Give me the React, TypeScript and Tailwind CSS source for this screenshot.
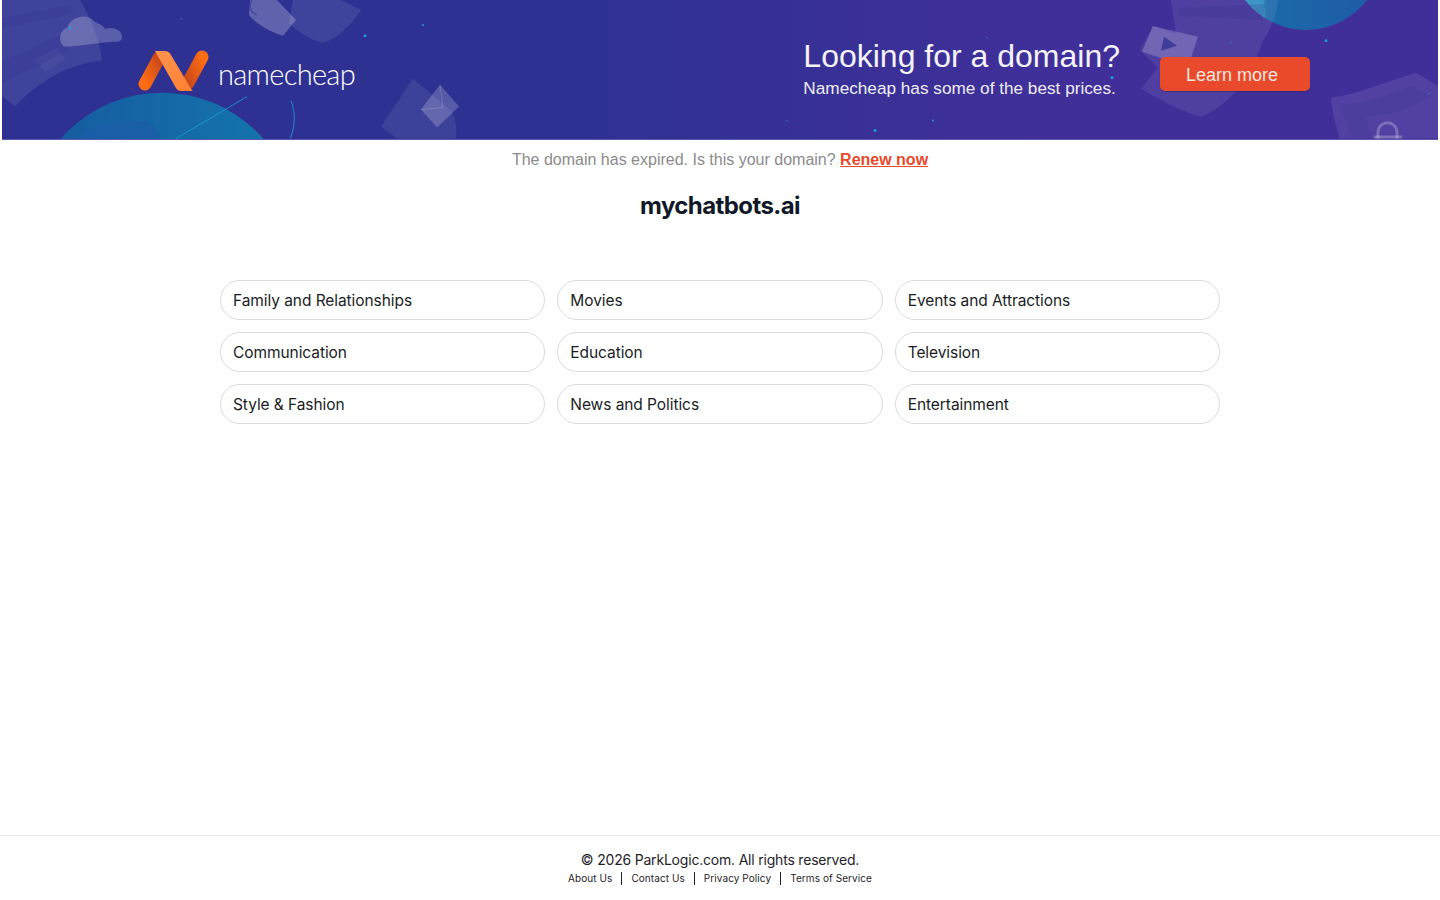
const topics = [
  'Family and Relationships',
  'Movies',
  'Events and Attractions',
  'Communication',
  'Education',
  'Television',
  'Style & Fashion',
  'News and Politics',
  'Entertainment',
]

const footerLinks = ['About Us', 'Contact Us', 'Privacy Policy', 'Terms of Service']

const dots: [number, number, number][] = [
  [70, 28, 1.5], [181, 19, 0.6], [365, 36, 1.5], [423, 25, 1], [787, 121, 0.6], [875, 131, 1.5], [933, 121, 1],
  [987, 38, 0.7], [1112, 78, 1.5], [1231, 43, 0.7], [1326, 41, 1.5], [1429, 94, 0.7], [267, 81, 0.8],
]

function BannerArt() {
  return (
    <svg className="absolute inset-0 h-full w-full" viewBox="2 0 1436 139" preserveAspectRatio="none" aria-hidden="true">
      <defs>
        <linearGradient id="planetA" x1="0" y1="0" x2="1" y2="0">
          <stop offset="0" stopColor="#17589f" />
          <stop offset="1" stopColor="#1377ad" />
        </linearGradient>
        <linearGradient id="planetB" x1="0" y1="0" x2="1" y2="0">
          <stop offset="0" stopColor="#3a8fc2" />
          <stop offset="0.22" stopColor="#2b8bc0" />
          <stop offset="0.24" stopColor="#1c69ab" />
          <stop offset="1" stopColor="#1f5aa6" />
        </linearGradient>
      </defs>

      {/* left paper + cloud */}
      <path d="M2 0H80C92 20 100 42 102 61C68 64 38 82 15 107L2 96Z" fill="#fff" fillOpacity="0.09" />
      <path d="M2 18L70 5L74 14L2 28ZM2 62L60 36L70 50L2 84Z" fill="#2e3192" fillOpacity="0.25" />
      <path d="M35 60L56 48L66 60L45 72Z" fill="#fff" fillOpacity="0.04" />
      <path d="M66 47C58 46 58 30 67 28C71 17 86 12 95 22C101 24 104 27 105 29C113 26 122 30 122 37C122 42 118 42 114 42C98 43 82 46 66 47Z" fill="#fff" fillOpacity="0.22" />

      {/* cup + paper at the top */}
      <path d="M293 0H341L361 10C350 26 338 38 323 43C310 40 298 32 289 23Z" fill="#fff" fillOpacity="0.09" />
      <path d="M250 0H277L296 20L283 36C270 32 256 24 249 15Z" fill="#fff" fillOpacity="0.24" />
      <path d="M252 0C248 6 250 12 257 15" stroke="#2e3192" strokeOpacity="0.5" strokeWidth="1.5" fill="none" />

      {/* planet */}
      <circle cx="162" cy="227" r="134" fill="url(#planetA)" />
      <path d="M75 139C90 128 122 120 148 122C156 127 159 132 160 139Z" fill="#1a5ea8" />
      <path d="M247 97L176 139" stroke="#1c9fd8" strokeWidth="0.8" fill="none" />
      <path d="M291 101C296 114 295 128 290 139" stroke="#1c9fd8" strokeWidth="0.8" fill="none" />

      {/* mail paper */}
      <path d="M413 79L452 112C456 122 457 130 456 139H397L381 127Z" fill="#fff" fillOpacity="0.08" />
      <path d="M440 85L459 107L437 128L421 110Z" fill="#fff" fillOpacity="0.2" />
      <path d="M421 110L443 108L440 85" stroke="#fff" strokeOpacity="0.2" strokeWidth="0.7" fill="none" />

      {/* right planet and papers */}
      <circle cx="1306" cy="-47" r="77" fill="url(#planetB)" />
      <path d="M1171 0H1278C1277 10 1272 30 1262 42C1257 62 1240 100 1202 117C1185 114 1160 100 1141 89L1158 68L1140 50L1153 26L1176 34Z" fill="#fff" fillOpacity="0.08" />
      <path d="M1178 8L1265 4L1262 20L1180 16Z" fill="#2e3192" fillOpacity="0.2" />
      <path d="M1153 26L1198 37L1188 67L1142 52Z" fill="#fff" fillOpacity="0.2" />
      <path d="M1164 37L1177 46L1161 51Z" fill="#2e3192" fillOpacity="0.75" />
      <path d="M1331 98C1355 95 1378 85 1416 73L1438 86V139H1340C1335 125 1332 110 1331 98Z" fill="#fff" fillOpacity="0.09" />
      <path d="M1340 106C1365 103 1385 96 1412 86L1430 96L1400 112L1366 118L1372 139H1352Z" fill="#2e3192" fillOpacity="0.16" />
      <path d="M1378 139V133C1378 120 1397 120 1397 133V139" stroke="#fff" strokeOpacity="0.25" strokeWidth="3" fill="none" />
      <path d="M1374 136H1402V139H1374Z" fill="#fff" fillOpacity="0.25" />

      {dots.map(([x, y, r]) => (
        <circle key={`${x}-${y}`} cx={x} cy={y} r={r} fill="#1d9be0" />
      ))}
    </svg>
  )
}

function NamecheapMark() {
  return (
    <svg className="h-[41px] w-[71px] shrink-0" viewBox="0 0 71 41" aria-hidden="true">
      <defs>
        <linearGradient id="legL" x1="0" y1="1" x2="1" y2="0">
          <stop offset="0" stopColor="#ff6d12" />
          <stop offset="1" stopColor="#c9481c" />
        </linearGradient>
        <linearGradient id="legR" x1="0" y1="1" x2="1" y2="0">
          <stop offset="0" stopColor="#c9481c" />
          <stop offset="1" stopColor="#ff6d12" />
        </linearGradient>
        <linearGradient id="ribbon" x1="0" y1="0" x2="1" y2="1">
          <stop offset="0" stopColor="#ff9550" />
          <stop offset="1" stopColor="#ff7f30" />
        </linearGradient>
      </defs>
      <path d="M7 34L21 8" stroke="url(#legL)" strokeWidth="13" strokeLinecap="round" fill="none" />
      <path d="M50 33L64 7" stroke="url(#legR)" strokeWidth="13" strokeLinecap="round" fill="none" />
      <path d="M17 1H27C30 1 31 2 33 5L52 37C53 39 54 40 55 41H43C41 41 39 40 38 38Z" fill="url(#ribbon)" />
    </svg>
  )
}

export default function App() {
  return (
    <div className="flex min-h-screen flex-col bg-white font-['Inter',sans-serif]">
      <div className="px-[2px]">
        <div className="relative flex h-[139.5px] items-center justify-between overflow-hidden border-b border-[#5a5aa8] bg-gradient-to-r from-[#2e3192] from-40% to-[#412f99] to-75% pl-[136px] pr-[128px]">
          <BannerArt />
          <div className="relative mt-[2px] flex items-center gap-[9px]">
            <NamecheapMark />
            <span className="mt-[7px] font-['Lato',sans-serif] text-[29px] font-light leading-none tracking-[-0.7px] text-white">namecheap</span>
          </div>
          <div className="relative flex items-center gap-[40px] font-['Liberation_Sans',sans-serif] text-white">
            <div className="pt-[2px]">
              <div className="text-[32px] leading-[36px] text-[#f4f3fa]">Looking for a domain?</div>
              <div className="mt-[1px] text-[17.2px] leading-[27px] text-[#eeedf7]">Namecheap has some of the best prices.</div>
            </div>
            <div className="mt-[10px] flex h-[34px] w-[150px] items-center rounded-[5px] bg-[#e84a2b] pl-[26px] pt-[2px] text-[18px] text-[#f9e6dc] shadow-[0_1px_1px_rgba(0,0,0,0.2)]">Learn more</div>
          </div>
        </div>
      </div>

      <p className="mt-[9px] text-center font-['Liberation_Sans',sans-serif] text-[16px] leading-[22px] text-[#8b8b8b]">
        The domain has expired. Is this your domain? <a className="font-bold text-[#e8492b] underline">Renew now</a>
      </p>
      <h1 className="mt-[19px] text-center text-[24px] font-bold leading-[32px] tracking-[-0.6px] text-[#111827]">mychatbots.ai</h1>

      <div className="mx-auto mt-[58px] grid w-[1000px] grid-cols-3 gap-3">
        {topics.map((t) => (
          <a key={t} className="flex h-10 items-center rounded-full border border-[#d9dbdf] px-3 pt-[2px] text-[15.5px] tracking-[-0.07px] text-[#1a1d24]">{t}</a>
        ))}
      </div>

      <footer className="mt-auto h-[65px] border-t border-[#e8e9eb] pt-[15px] text-center text-[#1f2329]">
        <div className="text-[14px] leading-[17px] tracking-[-0.2px]">© 2026 ParkLogic.com. All rights reserved.</div>
        <div className="mt-[2px] flex items-center justify-center text-[10px] leading-[16px] tracking-[0.08px]">
          {footerLinks.map((l, i) => (
            <span key={l} className="flex items-center">
              {i > 0 && <span className="mx-[9px] h-[13px] w-px bg-[#1f2329]" />}
              <a>{l}</a>
            </span>
          ))}
        </div>
      </footer>
    </div>
  )
}
